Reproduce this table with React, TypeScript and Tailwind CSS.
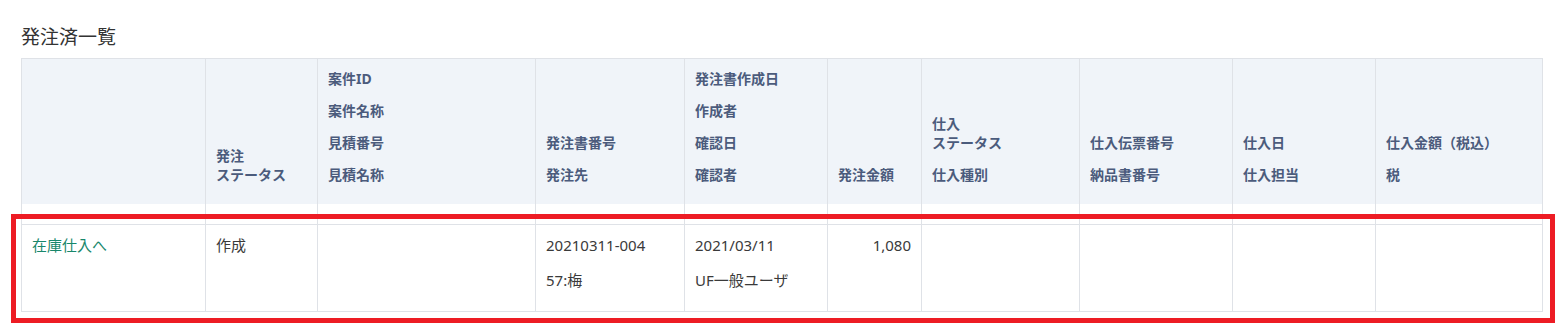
import React from "react";

const headers: string[][][] = [
  [],
  [["発注", "ステータス"]],
  [["案件ID"], ["案件名称"], ["見積番号"], ["見積名称"]],
  [["発注書番号"], ["発注先"]],
  [["発注書作成日"], ["作成者"], ["確認日"], ["確認者"]],
  [["発注金額"]],
  [["仕入", "ステータス"], ["仕入種別"]],
  [["仕入伝票番号"], ["納品書番号"]],
  [["仕入日"], ["仕入担当"]],
  [["仕入金額（税込）"], ["税"]],
];

const widths = [184, 112, 218, 149, 143, 94, 158, 153, 143, 167];

export default function App() {
  return (
    <div
      className="relative bg-white w-[1565px] h-[332px] px-[21px] pt-[24px] text-[#333333]"
      style={{ fontFamily: '"Noto Sans", "Noto Sans CJK JP", sans-serif' }}
    >
      <h1 className="text-[19px] leading-[26px] font-normal mb-[8px] text-[#333333]">発注済一覧</h1>
      <table className="table-fixed border-collapse w-[1521px]">
        <colgroup>
          {widths.map((w, i) => (
            <col key={i} style={{ width: w }} />
          ))}
        </colgroup>
        <thead>
          <tr>
            {headers.map((labels, i) => (
              <th
                key={i}
                className="bg-[#f0f4f9] border-x border-t border-[#dfe2e7] align-bottom text-left pt-[10px] pb-[20px] px-[10px] text-[14px] font-bold text-[#4b5b7c]"
              >
                {labels.map((lines, j) => (
                  <div key={j} className={`leading-[19px] ${j > 0 ? "mt-[13px]" : ""}`}>
                    {lines.map((l, k) => (
                      <div key={k}>{l}</div>
                    ))}
                  </div>
                ))}
              </th>
            ))}
          </tr>
        </thead>
        <tbody>
          <tr>
            {widths.map((_, i) => (
              <td key={i} className="h-[20px] p-0 border-x border-[#dfe2e7]"></td>
            ))}
          </tr>
          <tr className="text-[15px] leading-[21px] text-[#3a3a3a]">
            <td className="border border-[#dfe2e7] align-top pt-[10px] pb-[20px] px-[10px]">
              <span className="text-[#18876b]">在庫仕入へ</span>
            </td>
            <td className="border border-[#dfe2e7] align-top pt-[10px] pb-[20px] px-[10px]">作成</td>
            <td className="border border-[#dfe2e7] align-top pt-[10px] pb-[20px] px-[10px]"></td>
            <td className="border border-[#dfe2e7] align-top pt-[10px] pb-[20px] px-[10px]">
              <div>20210311-004</div>
              <div className="mt-[14px]">57:梅</div>
            </td>
            <td className="border border-[#dfe2e7] align-top pt-[10px] pb-[20px] px-[10px]">
              <div>2021/03/11</div>
              <div className="mt-[14px]">UF一般ユーザ</div>
            </td>
            <td className="border border-[#dfe2e7] align-top pt-[10px] pb-[20px] px-[10px] text-right">
              <div>1,080</div>
              <div className="mt-[14px] h-[21px]"></div>
            </td>
            <td className="border border-[#dfe2e7] align-top pt-[10px] pb-[20px] px-[10px]"></td>
            <td className="border border-[#dfe2e7] align-top pt-[10px] pb-[20px] px-[10px]"></td>
            <td className="border border-[#dfe2e7] align-top pt-[10px] pb-[20px] px-[10px]"></td>
            <td className="border border-[#dfe2e7] align-top pt-[10px] pb-[20px] px-[10px]"></td>
          </tr>
        </tbody>
      </table>
      <div className="absolute left-[11px] top-[214px] w-[1544px] h-[109px] border-[5px] border-[#ed1c24] pointer-events-none"></div>
    </div>
  );
}
